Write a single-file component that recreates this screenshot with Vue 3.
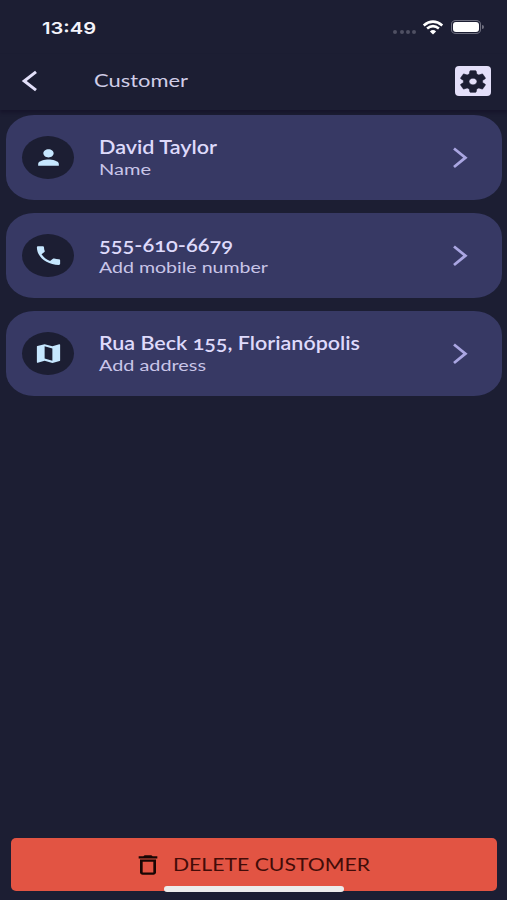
<template>
  <div class="screen">
    <div class="status-bar">
      <svg class="label time" width="56" height="24">
        <text x="0" y="18" textLength="54" lengthAdjust="spacingAndGlyphs">13:49</text>
      </svg>
      <div class="status-icons">
        <div class="dots">
          <span v-for="n in 4" :key="n" class="dot"></span>
        </div>
        <svg class="wifi" width="22" height="15" viewBox="0 0 22 15">
          <path d="M1.7 5.4Q11 -2.2 20.3 5.4" />
          <path d="M5.1 8.6Q11 3.8 16.9 8.6" />
          <path class="wifi-base" d="M7.9 11.4Q11 8.8 14.1 11.4L11 14.4Z" />
        </svg>
        <div class="battery"><div class="battery-level"></div></div>
        <span class="battery-cap"></span>
      </div>
    </div>

    <header class="header">
      <svg class="back" width="20" height="24" viewBox="0 0 20 24">
        <path d="M17 2.9L5.2 12L17 21.1" />
      </svg>
      <svg class="label title" width="96" height="24">
        <text x="0" y="18" textLength="94" lengthAdjust="spacingAndGlyphs">Customer</text>
      </svg>
      <button class="settings">
        <svg width="32" height="27" viewBox="0 0 24 24" preserveAspectRatio="none">
          <path :d="icons.settings" />
        </svg>
      </button>
    </header>

    <main class="list">
      <div v-for="item in items" :key="item.icon" class="card">
        <div class="avatar">
          <svg width="31" height="25" viewBox="0 0 24 24" preserveAspectRatio="none">
            <path :d="icons[item.icon]" />
          </svg>
        </div>
        <div class="info">
          <svg class="label name" width="300" height="24">
            <text x="0" y="18" :textLength="item.titleWidth" lengthAdjust="spacingAndGlyphs">{{ item.title }}</text>
          </svg>
          <svg class="label caption" width="300" height="20">
            <text x="0" y="15" :textLength="item.captionWidth" lengthAdjust="spacingAndGlyphs">{{ item.caption }}</text>
          </svg>
        </div>
        <svg class="chevron" width="18" height="24" viewBox="0 0 18 24">
          <path d="M3 2.5L14.4 11.7L3 21" />
        </svg>
      </div>
    </main>

    <button class="delete">
      <svg width="32" height="26" viewBox="0 0 24 24" preserveAspectRatio="none">
        <path :d="icons.trash" />
      </svg>
      <svg class="label delete-label" width="198" height="24">
        <text x="0" y="18" textLength="197" lengthAdjust="spacingAndGlyphs">DELETE CUSTOMER</text>
      </svg>
    </button>
    <div class="home-indicator"></div>
  </div>
</template>

<script setup>
const items = [
  {
    icon: "person",
    title: "David Taylor",
    titleWidth: 118,
    caption: "Name",
    captionWidth: 52,
  },
  {
    icon: "phone",
    title: "555-610-6679",
    titleWidth: 134,
    caption: "Add mobile number",
    captionWidth: 169,
  },
  {
    icon: "map",
    title: "Rua Beck 155, Florianópolis",
    titleWidth: 261,
    caption: "Add address",
    captionWidth: 107,
  },
];

const icons = {
  person:
    "M12 12c2.21 0 4-1.79 4-4s-1.79-4-4-4-4 1.79-4 4 1.79 4 4 4zm0 2c-2.67 0-8 1.34-8 4v2h16v-2c0-2.66-5.33-4-8-4z",
  phone:
    "M6.62 10.79c1.44 2.83 3.76 5.14 6.59 6.59l2.2-2.2c.27-.27.67-.36 1.02-.24 1.12.37 2.33.57 3.57.57.55 0 1 .45 1 1V20c0 .55-.45 1-1 1-9.39 0-17-7.61-17-17 0-.55.45-1 1-1h3.5c.55 0 1 .45 1 1 0 1.25.2 2.45.57 3.57.11.35.03.74-.25 1.02l-2.2 2.2z",
  map: "M20.5 3l-.16.03L15 5.1 9 3 3.36 4.9c-.21.07-.36.25-.36.48V20.5c0 .28.22.5.5.5l.16-.03L9 18.9l6 2.1 5.64-1.9c.21-.07.36-.25.36-.48V3.5c0-.28-.22-.5-.5-.5zM15 19l-6-2.11V5l6 2.11V19z",
  settings:
    "M19.14 12.94c.04-.3.06-.61.06-.94s-.02-.64-.07-.94l2.03-1.58c.18-.14.23-.41.12-.61l-1.92-3.32c-.12-.22-.37-.29-.59-.22l-2.39.96c-.5-.38-1.03-.7-1.62-.94l-.36-2.54c-.04-.24-.24-.41-.48-.41h-3.84c-.24 0-.43.17-.47.41l-.36 2.54c-.59.24-1.13.57-1.62.94l-2.39-.96c-.22-.08-.47 0-.59.22L2.74 8.87c-.12.21-.08.47.12.61l2.03 1.58c-.05.3-.09.63-.09.94s.02.64.07.94l-2.03 1.58c-.18.14-.23.41-.12.61l1.92 3.32c.12.22.37.29.59.22l2.39-.96c.5.38 1.03.7 1.62.94l.36 2.54c.05.24.24.41.48.41h3.84c.24 0 .44-.17.47-.41l.36-2.54c.59-.24 1.13-.56 1.62-.94l2.39.96c.22.08.47 0 .59-.22l1.92-3.32c.12-.22.07-.47-.12-.61l-2.01-1.58zM12 15c-1.66 0-3-1.34-3-3s1.34-3 3-3 3 1.34 3 3-1.34 3-3 3z",
  trash:
    "M15.5 4l-1-1h-5l-1 1H5v2h14V4zM6 7v12c0 1.1.9 2 2 2h8c1.1 0 2-.9 2-2V7H6zm2 2h8v10H8V9z",
};
</script>

<style>
body {
  background-color: #1c1e33;
}
</style>

<style scoped>
.screen {
  position: relative;
  display: flex;
  flex-direction: column;
  box-sizing: border-box;
  width: 507px;
  height: 900px;
  overflow: hidden;
  background-color: #1c1e33;
  font-family: Lato, "Open Sans", sans-serif;
}
svg {
  display: block;
  flex: none;
}
button {
  padding: 0;
  border: none;
  font-family: inherit;
}
.label {
  overflow: visible;
}
.status-bar {
  display: flex;
  justify-content: space-between;
  align-items: center;
  height: 54px;
  padding: 0 23px 0 42px;
}
.time {
  margin-top: 1px;
  fill: #f4f4fb;
  font-family: Inter, sans-serif;
  font-size: 16.5px;
  font-weight: 600;
}
.status-icons {
  display: flex;
  align-items: center;
}
.dots {
  display: flex;
  gap: 2.2px;
  margin: 10px 6px 0 0;
}
.dot {
  width: 4px;
  height: 4px;
  border-radius: 50%;
  background-color: #4f5063;
}
.wifi {
  margin-right: 7px;
  fill: none;
  stroke: #fff;
  stroke-width: 2.6;
}
.wifi .wifi-base {
  fill: #fff;
  stroke: none;
}
.battery {
  box-sizing: border-box;
  width: 30px;
  height: 14px;
  padding: 1px;
  border: 1px solid #6f7080;
  border-radius: 5px / 4px;
}
.battery-level {
  height: 100%;
  border-radius: 3px;
  background-color: #fff;
}
.battery-cap {
  width: 2px;
  height: 4px;
  margin-left: 1px;
  border-radius: 0 2px 2px 0;
  background-color: #6f7080;
}
.header {
  display: flex;
  align-items: center;
  box-sizing: border-box;
  height: 56px;
  padding: 0 16px 2px 19px;
  box-shadow: 0 3px 3px #17152c;
}
.back {
  fill: none;
  stroke: #e3e0fa;
  stroke-width: 3;
}
.title {
  margin-left: 55px;
  fill: #d0cde7;
  font-size: 17.5px;
}
.settings {
  display: flex;
  align-items: center;
  justify-content: center;
  width: 36px;
  height: 30px;
  margin-left: auto;
  border-radius: 4px;
  background-color: #e3dff9;
  fill: #1c1e33;
}
.settings path {
  stroke: #1c1e33;
  stroke-width: 0.5;
}
.list {
  display: flex;
  flex-direction: column;
  gap: 13px;
  padding: 5px 5px 0 6px;
}
.card {
  display: flex;
  align-items: center;
  box-sizing: border-box;
  height: 85px;
  padding: 0 33px 0 16px;
  border-radius: 28px / 24px;
  background-color: #373964;
}
.avatar {
  display: flex;
  align-items: center;
  justify-content: center;
  width: 52px;
  height: 43px;
  border-radius: 50%;
  background-color: #1c1e33;
  fill: #c6e7ff;
}
.info {
  margin-left: 25px;
}
.name {
  fill: #dedafb;
  font-size: 18.5px;
  font-weight: 600;
  font-variant-numeric: oldstyle-nums;
}
.caption {
  fill: #c9c5e8;
  font-size: 15.5px;
}
.chevron {
  margin-left: auto;
  fill: none;
  stroke: #aaa6e2;
  stroke-width: 2.8;
}
.delete {
  display: flex;
  align-items: center;
  height: 53px;
  margin: auto 10px 9px 11px;
  padding-left: 121px;
  border-radius: 5px;
  background-color: #e25443;
  fill: #180604;
}
.delete-label {
  margin-left: 9px;
  fill: #420c08;
  font-size: 17.5px;
}
.home-indicator {
  position: absolute;
  left: 164px;
  bottom: 8px;
  width: 180px;
  height: 6px;
  border-radius: 3px;
  background-color: #ececec;
}
</style>
